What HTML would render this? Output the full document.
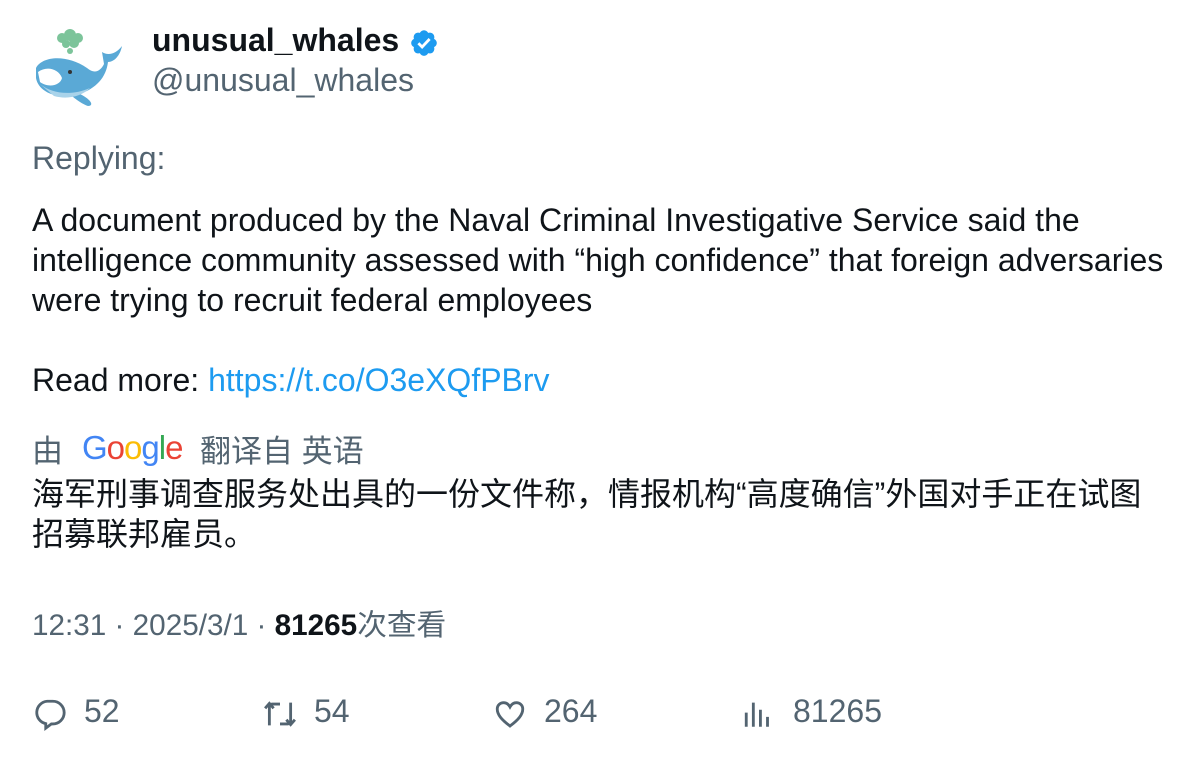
<!DOCTYPE html>
<html><head><meta charset="utf-8"><style>
body{margin:0;background:#fff;width:1196px;height:758px;overflow:hidden;font-family:"Liberation Sans","Noto Sans CJK SC",sans-serif;color:#0f1419;position:relative}
.a{position:absolute;white-space:nowrap}
.g{color:#536471}
</style></head><body>
<svg class="a" style="left:32px;top:26px" width="94" height="84" viewBox="0 0 94 84">
<g fill="#7cc49a"><circle cx="30" cy="12" r="5"/><circle cx="38" cy="9" r="6"/><circle cx="46" cy="12" r="5"/><circle cx="34" cy="18" r="4"/><circle cx="42" cy="17" r="5"/><circle cx="38" cy="25" r="3"/></g>
<path d="M4 42 C10 30 35 28 55 42 C62 48 68 46 72 38 L70 26 C76 30 84 28 90 20 C88 30 82 36 76 36 C74 52 64 62 48 68 C60 74 62 80 56 80 C50 78 42 72 40 70 C20 72 6 64 4 52 Z" fill="#5aa9d6"/>
<path d="M6 46 C14 40 26 42 30 52 C28 60 16 62 8 56 Z" fill="#fff"/>
<path d="M8 58 C20 68 40 70 58 62 C50 70 36 74 22 70 Z" fill="#a9d3ea"/>
<circle cx="38" cy="46" r="2" fill="#333"/>
</svg>
<div class="a" style="left:152px;top:22px;font-size:32px;font-weight:bold">unusual_whales</div>
<svg class="a" style="left:409px;top:28px" width="30" height="30" viewBox="0 0 24 24"><path fill="#1d9bf0" d="M22.25 12c0-1.43-.88-2.67-2.19-3.34.46-1.39.2-2.9-.81-3.91s-2.52-1.27-3.91-.81c-.66-1.31-1.91-2.19-3.34-2.19s-2.67.88-3.33 2.19c-1.4-.46-2.91-.2-3.92.81s-1.26 2.52-.8 3.91c-1.31.67-2.2 1.910-2.2 3.34s.89 2.67 2.2 3.34c-.46 1.39-.21 2.9.8 3.91s2.52 1.26 3.91.81c.67 1.31 1.91 2.19 3.34 2.19s2.68-.88 3.34-2.19c1.39.45 2.9.2 3.91-.81s1.27-2.52.81-3.91c1.31-.67 2.19-1.91 2.19-3.34z"/><path d="M7.5 12.2l3 3 6-6.4" stroke="#fff" stroke-width="2.2" fill="none"/></svg>
<div class="a g" style="left:152px;top:62px;font-size:32px">@unusual_whales</div>
<div class="a g" style="left:32px;top:140px;font-size:32px">Replying:</div>
<div class="a" style="left:32px;top:200px;font-size:32px;line-height:40px">A document produced by the Naval Criminal Investigative Service said the<br>intelligence community assessed with “high confidence” that foreign adversaries<br>were trying to recruit federal employees<br><br>Read more: <span style="color:#1d9bf0">https://t.co/O3eXQfPBrv</span></div>
<div class="a g" style="left:32px;top:426px;font-size:31px">由</div>
<div class="a" style="left:82px;top:429px;font-size:33px;letter-spacing:-1px;font-weight:500"><span style="color:#4285f4">G</span><span style="color:#ea4335">o</span><span style="color:#fbbc05">o</span><span style="color:#4285f4">g</span><span style="color:#34a853">l</span><span style="color:#ea4335">e</span></div>
<div class="a g" style="left:200px;top:426px;font-size:31px">翻译自 英语</div>
<div class="a" style="left:32px;top:474px;font-size:32px;line-height:40px">海军刑事调查服务处出具的一份文件称，情报机构“高度确信”外国对手正在试图<br>招募联邦雇员。</div>
<div class="a g" style="left:32px;top:601px;font-size:29.7px">12:31 · 2025/3/1 · <b style="color:#0f1419">81265</b>次查看</div>
<svg class="a" style="left:33px;top:697px" width="34" height="34" viewBox="0 0 24 24" fill="none" stroke="#536471" stroke-width="2"><path d="M10 3h4a8 8 0 010 16h-1l-4 3v-3.2A8 8 0 0110 3z"/></svg>
<div class="a g" style="left:84px;top:693px;font-size:32px">52</div>
<svg class="a" style="left:262px;top:697px" width="36" height="34" viewBox="0 0 24 24" fill="none" stroke="#536471" stroke-width="2"><path d="M4.5 20V7a2 2 0 012-2H12M1.5 8l3-3.5 3 3.5M19.5 4v13a2 2 0 01-2 2H12M16.5 16l3 3.5 3-3.5"/></svg>
<div class="a g" style="left:314px;top:693px;font-size:32px">54</div>
<svg class="a" style="left:493px;top:697px" width="34" height="34" viewBox="0 0 24 24" fill="none" stroke="#536471" stroke-width="2"><path d="M12 20.5C6 16 3 12.5 3 8.5 3 5.5 5.3 4 7.5 4c2 0 3.5 1.2 4.5 3 1-1.8 2.5-3 4.5-3C18.7 4 21 5.5 21 8.5c0 4-3 7.5-9 12z"/></svg>
<div class="a g" style="left:544px;top:693px;font-size:32px">264</div>
<svg class="a" style="left:742px;top:697px" width="34" height="34" viewBox="0 0 24 24" fill="none" stroke="#536471" stroke-width="2"><path d="M3 21V11M8 21V4M13 21V9M18 21V14"/></svg>
<div class="a g" style="left:793px;top:693px;font-size:32px">81265</div>
</body></html>
